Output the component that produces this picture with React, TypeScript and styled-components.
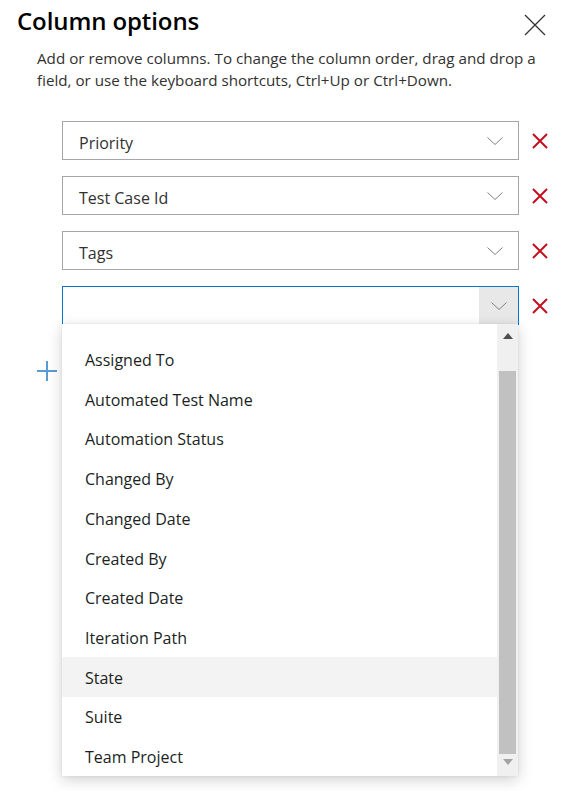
import React from "react";
import styled, { createGlobalStyle } from "styled-components";

const Global = createGlobalStyle`
  html, body { margin: 0; padding: 0; background: #ffffff; }
  body { font-family: "Open Sans", "Noto Sans", sans-serif; color: #201f1e; }
`;

const Panel = styled.div`
  width: 565px;
  height: 791px;
  overflow: hidden;
  position: relative;
  background: #fff;
`;

const Header = styled.div`
  display: flex;
  justify-content: space-between;
  align-items: flex-start;
  padding: 3px 19px 0 17px;
  height: 39px;
  box-sizing: border-box;
`;

const Title = styled.h1`
  margin: 0;
  font-size: 24px;
  font-weight: 600;
  line-height: 36px;
  color: #000;
  letter-spacing: -0.1px;
`;

const CloseButton = styled.button`
  border: none;
  background: none;
  padding: 0;
  margin-top: 11px;
  width: 22px;
  height: 22px;
  display: flex;
  cursor: pointer;
`;

const Description = styled.p`
  margin: 8px 0 0 37px;
  width: 515px;
  font-size: 15.2px;
  line-height: 22px;
  color: #323130;
`;

const Rows = styled.div`
  display: flex;
  flex-direction: column;
  gap: 16px;
  margin: 30px 0 0 62px;
`;

const Row = styled.div`
  display: flex;
  align-items: center;
`;

const SelectBox = styled.div<{ $focused?: boolean }>`
  position: relative;
  box-sizing: border-box;
  width: 457px;
  height: 39px;
  border: 1px solid ${(p) => (p.$focused ? "#0078d4" : "#a6a6a6")};
  display: flex;
  align-items: center;
  background: #fff;
`;

const SelectText = styled.span`
  flex: 1;
  padding-left: 16px;
  font-size: 16px;
  color: #323130;
  line-height: 37px;
  padding-top: 6px;
`;

const Chevron = styled.span<{ $active?: boolean }>`
  width: 39px;
  align-self: stretch;
  display: flex;
  align-items: center;
  justify-content: center;
  background: ${(p) => (p.$active ? "#e8e8e8" : "transparent")};
  margin-right: ${(p) => (p.$active ? "0" : "4px")};
`;

const RemoveButton = styled.button`
  border: none;
  background: none;
  padding: 0;
  margin-left: 13px;
  width: 16px;
  height: 16px;
  display: flex;
  cursor: pointer;
`;

const AddRow = styled.div`
  display: flex;
  align-items: center;
  margin: 36px 0 0 37px;
  height: 20px;
`;

const Dropdown = styled.div`
  position: absolute;
  top: 100%;
  left: -1px;
  width: 456px;
  height: 452px;
  background: #fff;
  box-shadow: 0 4px 14px rgba(0, 0, 0, 0.18), 0 0 3px rgba(0, 0, 0, 0.08);
  display: flex;
  z-index: 10;
`;

const List = styled.div`
  flex: 1;
  padding-top: 15px;
  display: flex;
  flex-direction: column;
`;

const Item = styled.div<{ $hover?: boolean }>`
  height: 40px;
  display: flex;
  align-items: center;
  padding-left: 23px;
  padding-top: 2px;
  box-sizing: border-box;
  font-size: 16px;
  color: #201f1e;
  background: ${(p) => (p.$hover ? "#f3f3f3" : "transparent")};
`;

const Scrollbar = styled.div`
  width: 21px;
  background: #f0f0f0;
  display: flex;
  flex-direction: column;
  align-items: center;
`;

const Arrow = styled.div<{ $down?: boolean }>`
  height: ${(p) => (p.$down ? "22px" : "47px")};
  display: flex;
  align-items: flex-start;
  padding-top: ${(p) => (p.$down ? "5px" : "9px")};
  box-sizing: border-box;
`;

const Thumb = styled.div`
  width: 17px;
  flex: 1;
  background: #c1c1c1;
`;

const ChevronIcon = () => (
  <svg width="16" height="8" viewBox="0 0 16 8">
    <path d="M0.5 0.5 L8 7.5 L15.5 0.5" fill="none" stroke="#808080" strokeWidth="1" />
  </svg>
);

const RedX = () => (
  <svg width="16" height="16" viewBox="0 0 16 16">
    <path d="M1 1 L15 15 M15 1 L1 15" stroke="#c50f1f" strokeWidth="2" />
  </svg>
);

const items = [
  "Assigned To",
  "Automated Test Name",
  "Automation Status",
  "Changed By",
  "Changed Date",
  "Created By",
  "Created Date",
  "Iteration Path",
  "State",
  "Suite",
  "Team Project",
];

const fields = ["Priority", "Test Case Id", "Tags"];

export default function App() {
  return (
    <Panel>
      <Global />
      <Header>
        <Title>Column options</Title>
        <CloseButton aria-label="Close">
          <svg width="22" height="22" viewBox="0 0 22 22">
            <path d="M1 1 L21 21 M21 1 L1 21" stroke="#333" strokeWidth="1.3" />
          </svg>
        </CloseButton>
      </Header>
      <Description>
        Add or remove columns. To change the column order, drag and drop a field, or use the
        keyboard shortcuts, Ctrl+Up or Ctrl+Down.
      </Description>
      <Rows>
        {fields.map((f) => (
          <Row key={f}>
            <SelectBox>
              <SelectText>{f}</SelectText>
              <Chevron>
                <ChevronIcon />
              </Chevron>
            </SelectBox>
            <RemoveButton aria-label="Remove">
              <RedX />
            </RemoveButton>
          </Row>
        ))}
        <Row>
          <SelectBox $focused>
            <SelectText />
            <Chevron $active>
              <ChevronIcon />
            </Chevron>
            <Dropdown>
              <List>
                {items.map((it) => (
                  <Item key={it} $hover={it === "State"}>
                    {it}
                  </Item>
                ))}
              </List>
              <Scrollbar>
                <Arrow>
                  <svg width="10" height="6" viewBox="0 0 10 6">
                    <path d="M0 6 L5 0 L10 6 Z" fill="#505050" />
                  </svg>
                </Arrow>
                <Thumb />
                <Arrow $down>
                  <svg width="10" height="6" viewBox="0 0 10 6">
                    <path d="M0 0 L5 6 L10 0 Z" fill="#a3a3a3" />
                  </svg>
                </Arrow>
              </Scrollbar>
            </Dropdown>
          </SelectBox>
          <RemoveButton aria-label="Remove">
            <RedX />
          </RemoveButton>
        </Row>
      </Rows>
      <AddRow>
        <svg width="20" height="20" viewBox="0 0 20 20">
          <path d="M10 0 V20 M0 10 H20" stroke="#5b9bd5" strokeWidth="2" />
        </svg>
      </AddRow>
    </Panel>
  );
}
